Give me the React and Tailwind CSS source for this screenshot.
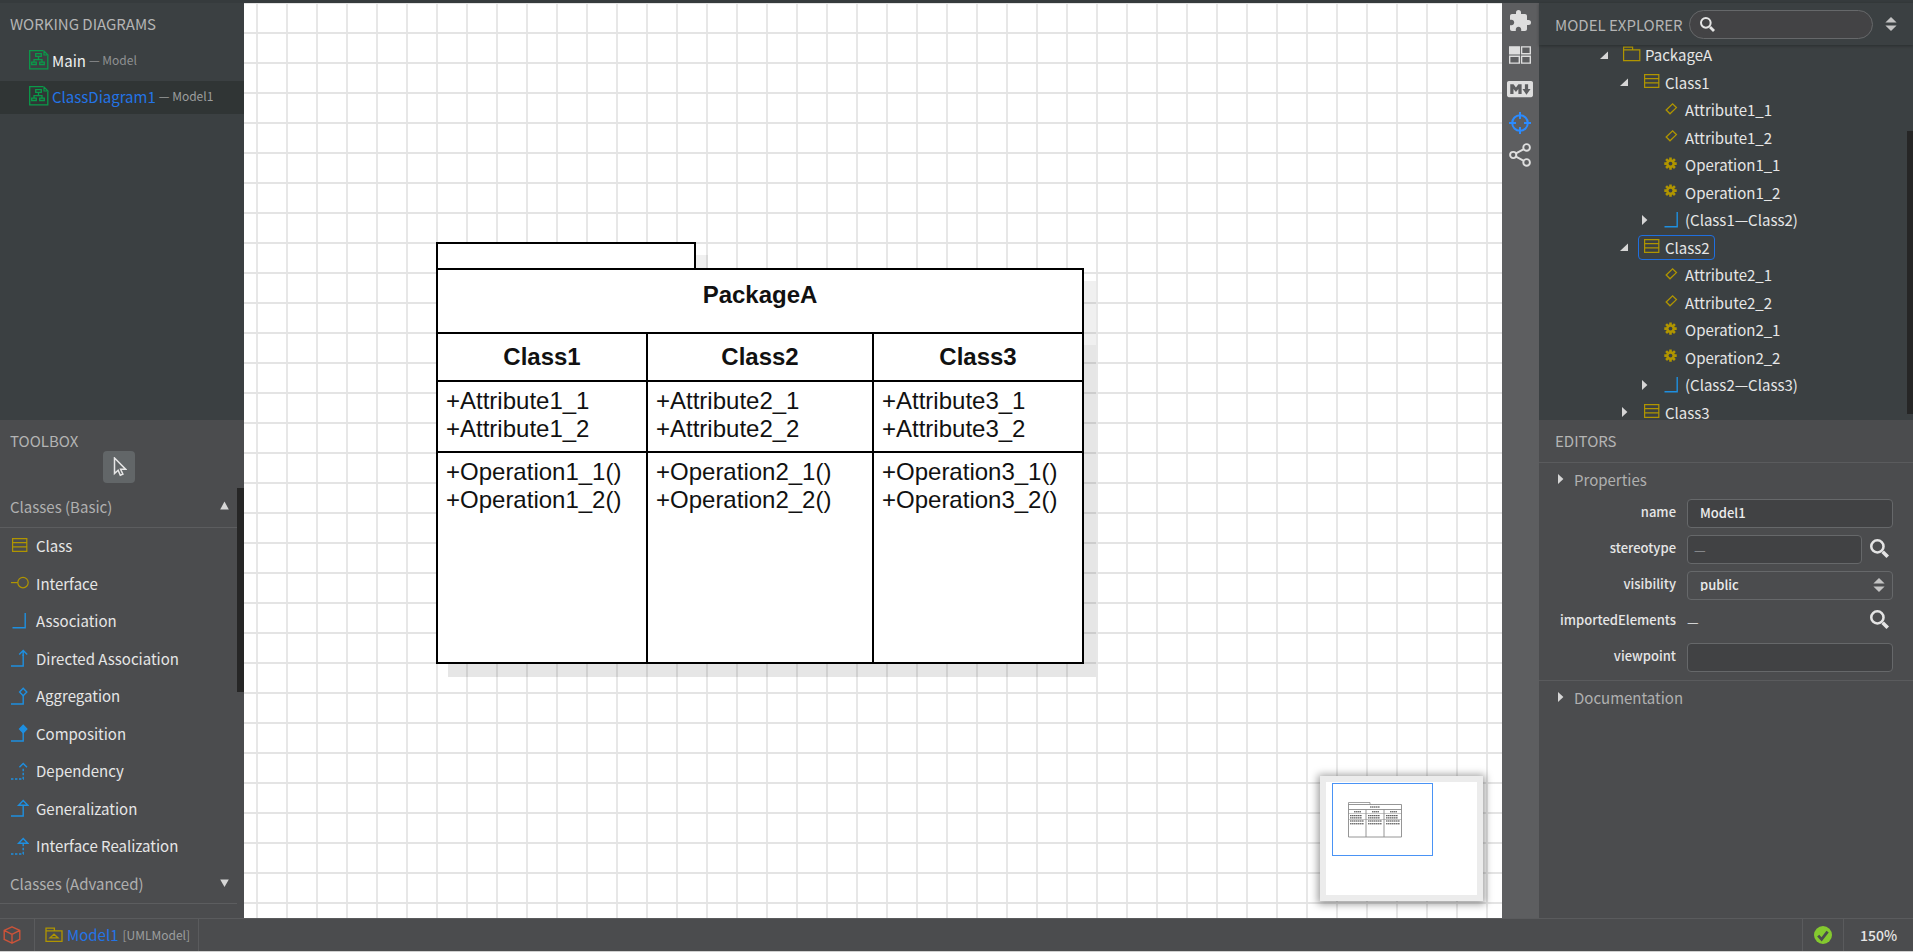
import React from "react";
import { MdExtension } from "react-icons/md";

const GOLD = "#b09500";
const BLUE = "#1e8fe0";

/* ---------- icons ---------- */

function DiagramIcon() {
  return (
    <svg width="20" height="20" viewBox="0 0 20 20" fill="none" stroke="#0a9a4a" strokeWidth="1.3" className="shrink-0">
      <path d="M14 .7H.7v18.1h18.1V5.5" />
      <path d="M15 1v4h4z" strokeWidth="1.2" />
      <path d="M6.7 3.7h5.6v2.6H6.7zM2.7 12.2h4.6v2.3H2.7zM10.7 12.2h4.6v2.3h-4.6z" />
      <path d="M9.5 6.5v3M5 12V9.6h8V12" />
    </svg>
  );
}

function ClassIcon() {
  return (
    <svg width="18" height="18" viewBox="0 0 18 18" fill="none" stroke={GOLD} strokeWidth="1.2" className="shrink-0">
      <path d="M1.6 1.6h14.2v12.8H1.6zM1.6 5.7h14.2M1.6 9.9h14.2" />
    </svg>
  );
}

function InterfaceIcon() {
  return (
    <svg width="18" height="18" viewBox="0 0 18 18" fill="none" stroke={GOLD} strokeWidth="1.2" className="shrink-0">
      <circle cx="12" cy="8.6" r="5.2" />
      <path d="M0 8.6h6.8" />
    </svg>
  );
}

function PackageIcon() {
  return (
    <svg width="18" height="18" viewBox="0 0 18 18" fill="none" stroke={GOLD} strokeWidth="1.2" className="shrink-0">
      <path d="M.6 14.6V1.2h9v2.6h7.2v10.8zM.6 3.8h9" />
    </svg>
  );
}

function ModelIcon() {
  return (
    <svg width="18" height="16" viewBox="0 0 18 16" fill="none" stroke={GOLD} strokeWidth="1.3" className="shrink-0">
      <path d="M1 14.3V1.2h8.4v2.6H17v10.5zM1 3.8h8.4" />
      <path d="M5 10.8h8l-4-3.6z" />
    </svg>
  );
}

function AttributeIcon() {
  return (
    <svg width="18" height="18" viewBox="0 0 18 18" fill="none" stroke={GOLD} strokeWidth="1.3" className="shrink-0">
      <path d="M3.2 9 9.6 2.8l3.8 3.8-6.4 6.2z" />
    </svg>
  );
}

function OperationIcon() {
  return (
    <svg width="18" height="18" viewBox="0 0 18 18" className="shrink-0">
      <g stroke={GOLD} strokeWidth="2.6">
        <path d="M7.5 1.4v12.4M1.3 7.6h12.4M3.1 3.2l8.8 8.8M11.9 3.2l-8.8 8.8" />
      </g>
      <circle cx="7.5" cy="7.6" r="4.4" fill={GOLD} />
      <circle cx="7.5" cy="7.6" r="1.9" fill="#3b4042" />
    </svg>
  );
}

function AssociationIcon() {
  return (
    <svg width="18" height="18" viewBox="0 0 18 18" fill="none" stroke={BLUE} strokeWidth="1.4" className="shrink-0">
      <path d="M1.5 15.8h12.7V1" />
    </svg>
  );
}

function RelationIcon({ dashed, children }) {
  return (
    <svg width="18" height="18" viewBox="0 0 18 18" fill="none" stroke={BLUE} strokeWidth="1.4" className="shrink-0">
      <path d="M0 17h12.2V5.5" strokeDasharray={dashed ? "2.4 1.6" : undefined} />
      {children}
    </svg>
  );
}

function SearchIcon({ size }) {
  return (
    <svg width={size} height={size} viewBox="0 0 18 18" fill="none" stroke="#e4e4e4" className="shrink-0">
      <circle cx="7" cy="7" r="5.8" strokeWidth="2.4" />
      <path d="M12 12l4.8 4.8" strokeWidth="3.4" />
    </svg>
  );
}

function SortIcon({ className }) {
  return (
    <svg width="12" height="16" viewBox="0 0 12 16" fill="#c4c4c4" className={className}>
      <path d="M6 1l5.6 5.6H.4zM6 15L.4 9.4h11.2z" />
    </svg>
  );
}

function Triangle({ dir }) {
  const shapes = {
    right: "M2 0l5.4 5L2 10z",
    open: "M0 9 8 1.4V9z",
    up: "M4.5 .6 8.8 8.4H.2z",
    down: "M4.5 9L.2 1.5h8.6z",
  };
  return (
    <svg width="9" height="10" viewBox="0 0 9 10" fill="#d6d6d6" className="shrink-0">
      <path d={shapes[dir]} />
    </svg>
  );
}

/* ---------- left side ---------- */

const tools = [
  ["Class", <ClassIcon />],
  ["Interface", <InterfaceIcon />],
  ["Association", <AssociationIcon />],
  ["Directed Association", <RelationIcon><path d="M12.2 7V1.5M8.2 5.4l4-4 4 4" /></RelationIcon>],
  ["Aggregation", <RelationIcon><path d="M12.2 1.2 15.8 5l-3.6 3.8L8.6 5z" fill="#4b4c4e" /></RelationIcon>],
  ["Composition", <RelationIcon><path d="M12.2 1.2 15.8 5l-3.6 3.8L8.6 5z" fill={BLUE} /></RelationIcon>],
  ["Dependency", <RelationIcon dashed><path d="M8.4 5.2l3.8-3.8L16 5.2" /></RelationIcon>],
  ["Generalization", <RelationIcon><path d="M12.2 1.4l4.6 4.8H7.6z" fill="#4b4c4e" /></RelationIcon>],
  ["Interface Realization", <RelationIcon dashed><path d="M12.2 1.4l4.6 4.8H7.6z" fill="#4b4c4e" /></RelationIcon>],
];

function WorkingDiagrams() {
  return (
    <section className="h-[417px] shrink-0 bg-[#3b4042] pt-2">
      <h2 className="px-[10px] text-[15px] leading-[26px] text-[#b4b4b4]">WORKING DIAGRAMS</h2>
      <ul className="mt-2">
        <li className="flex h-[33px] items-center gap-[3px] pb-[3px] pl-[29px]">
          <DiagramIcon />
          <span className="text-[15px] text-[#f0f0f0]">Main</span>
          <span className="text-[12px] text-[#8f9192]">— Model</span>
        </li>
        <li className="mt-[3px] flex h-[33px] items-center gap-[3px] bg-[#303535] pb-[3px] pl-[29px]">
          <DiagramIcon />
          <span className="text-[15px] text-[#2374e6]">ClassDiagram1</span>
          <span className="text-[12px] text-[#9c9e9e]">— Model1</span>
        </li>
      </ul>
    </section>
  );
}

function Toolbox() {
  const group = "flex w-full items-center justify-between border-b border-[#5c5d5f] pr-2 pb-[3px] pl-[10px] text-[15px] text-[#b0b0b0]";
  return (
    <section className="flex min-h-0 flex-1 flex-col bg-[#4b4c4e] pt-2">
      <h2 className="px-[10px] text-[15px] leading-[26px] text-[#b4b4b4]">TOOLBOX</h2>
      <button aria-label="Select" className="-mt-[3px] ml-[103px] grid size-8 shrink-0 place-items-center rounded bg-[#626668]">
        <svg width="16" height="20" viewBox="0 0 16 20" fill="none" stroke="#e6e6e6" strokeWidth="1.5">
          <path d="M3.5 1v15.5l3.6-3.2 2.2 5 2.6-1.1-2.3-5h5z" />
        </svg>
      </button>
      <div className="mt-[5px] flex min-h-0 flex-1 overflow-hidden">
        <div className="min-w-0 flex-1">
          <button className={`${group} h-10`}>
            Classes (Basic)
            <Triangle dir="up" />
          </button>
          <ul>
            {tools.map(([name, icon]) => (
              <li key={name} className="flex items-center gap-[7px] pb-[3px] pl-[11px] text-[15px] text-[#e6e6e6] odd:h-[38px] even:h-[37px]">
                {icon}
                {name}
              </li>
            ))}
          </ul>
          <button className={`${group} h-[38px]`}>
            Classes (Advanced)
            <Triangle dir="down" />
          </button>
        </div>
        <div className="h-[204px] w-[7px] bg-[#262626]" />
      </div>
    </section>
  );
}

/* ---------- canvas ---------- */

const classes = [1, 2, 3].map((n) => ({
  name: `Class${n}`,
  attributes: [`+Attribute${n}_1`, `+Attribute${n}_2`],
  operations: [`+Operation${n}_1()`, `+Operation${n}_2()`],
}));

function PackageNode() {
  return (
    <div className="absolute top-[239px] left-[192px] w-[648px] font-['Liberation_Sans',sans-serif] text-[24px] leading-7 text-[#111]">
      <div className="h-[26px] w-[260px] border-2 border-b-0 border-black bg-white shadow-[12px_13px_0_rgba(0,0,0,0.06)]" />
      <div className="relative border-2 border-black bg-white shadow-[12px_13px_0_rgba(0,0,0,0.06)]">
        <div className="h-[62px] pt-[11px] text-center font-bold">PackageA</div>
        <div className="-mx-[2px] -mb-[2px] grid grid-cols-[210px_226px_1fr] border-2 border-black shadow-[12px_13px_0_rgba(0,0,0,0.04)]">
          {classes.map((c, i) => (
            <div key={c.name} className={i < 2 ? "h-[328px] border-r-2 border-black" : "h-[328px]"}>
              <div className="py-[9px] text-center font-bold">{c.name}</div>
              <div className="border-t-2 border-black px-2 pt-[5px] pb-2">
                {c.attributes.map((a) => <div key={a}>{a}</div>)}
              </div>
              <div className="border-t-2 border-black px-2 pt-[5px]">
                {c.operations.map((o) => <div key={o}>{o}</div>)}
              </div>
            </div>
          ))}
        </div>
      </div>
    </div>
  );
}

function Minimap() {
  return (
    <div className="absolute right-[19px] bottom-[17px] h-[125px] w-[163px] border-[6px] border-[#ececec] bg-white pt-px pl-[6px] shadow-[0_1px_8px_2px_rgba(0,0,0,0.4)]">
      <div className="h-[73px] w-[101px] border border-[#4a93f5] pt-[18px] pl-[15px]">
        <svg width="56" height="38" viewBox="0 0 56 38" fill="none" stroke="#8a8a8a">
          <path d="M.5 3V.5h21.5V3" strokeWidth=".8" />
          <path d="M.5 2.5h53v32.5H.5zM.5 7.5h53M18 7.5V35M36 7.5V35" strokeWidth=".9" />
          <path d="M.5 11.5h53M.5 17.5h53" strokeWidth=".5" />
          <g stroke="#222" strokeWidth=".9" strokeDasharray="1.6 .4">
            <path d="M22 5h10M6 9.8h7M24 9.8h7M42 9.8h7" />
            <path d="M2 13.7h12M20 13.7h12M38 13.7h12M2 15.9h12M20 15.9h12M38 15.9h12" />
            <path d="M2 19h14M20 19h14M38 19h14M2 21.8h14M20 21.8h14M38 21.8h14" />
          </g>
        </svg>
      </div>
    </div>
  );
}

function Canvas() {
  return (
    <main className="relative min-w-0 flex-1 overflow-hidden bg-white bg-[linear-gradient(#e4e4e4_2px,transparent_2px),linear-gradient(90deg,#e7e7e7_2px,transparent_2px)] bg-[size:30px_30px] bg-[position:12px_-1px]">
      <PackageNode />
      <Minimap />
    </main>
  );
}

/* ---------- vertical tool strip ---------- */

function ToolStrip() {
  return (
    <nav className="flex w-[37px] shrink-0 flex-col items-center bg-[#5d5e60] pt-1 pr-[2px] text-[#dedede]">
      <button aria-label="Extensions" className="grid h-7 w-full place-items-center"><MdExtension size={24} /></button>
      <button aria-label="Layout" className="mt-[6px] grid h-7 w-full place-items-center">
        <svg width="22" height="18" viewBox="0 0 22 18" fill="none" stroke="currentColor" strokeWidth="1.4">
          <path d="M.7.9h9.6v6.9H.7z" fill="currentColor" />
          <path d="M12.6.9h8.7v6.9h-8.7zM.7 10.3h9.6v6.8H.7zM12.6 10.3h8.7v6.8h-8.7z" />
        </svg>
      </button>
      <button aria-label="Markdown" className="mt-[6px] grid h-7 w-full place-items-center">
        <svg width="26" height="26" viewBox="0 0 16 16" fill="currentColor">
          <path d="M14.85 3H1.15C.52 3 0 3.52 0 4.15v7.69C0 12.48.52 13 1.15 13h13.69c.64 0 1.15-.52 1.15-1.15v-7.7C16 3.52 15.48 3 14.85 3zM9 11H7V8L5.5 9.92 4 8v3H2V5h2l1.5 2L7 5h2v6zm2.99.5L9.5 8H11V5h2v3h1.5l-2.51 3.5z" />
        </svg>
      </button>
      <button aria-label="Center" className="mt-[6px] grid h-7 w-full place-items-center">
        <svg width="22" height="22" viewBox="0 0 22 22" fill="none" stroke="#2b8bff" strokeWidth="2">
          <circle cx="11" cy="11" r="7.8" />
          <path d="M11 0v7M11 15v7M0 11h7M15 11h7" />
        </svg>
      </button>
      <button aria-label="Share" className="mt-1 grid h-7 w-full place-items-center">
        <svg width="22" height="24" viewBox="0 0 22 24" fill="none" stroke="currentColor" strokeWidth="1.9">
          <circle cx="4.2" cy="12" r="3.1" />
          <circle cx="17.6" cy="4.4" r="3.3" />
          <circle cx="17.6" cy="19.4" r="3.3" />
          <path d="M7 10.4l7.8-4.3M7 13.6l7.8 4.2" />
        </svg>
      </button>
    </nav>
  );
}

/* ---------- right side ---------- */

const tree = [
  [0, "PackageA", "package", "open"],
  [1, "Class1", "class", "open"],
  [2, "Attribute1_1", "attribute"],
  [2, "Attribute1_2", "attribute"],
  [2, "Operation1_1", "operation"],
  [2, "Operation1_2", "operation"],
  [2, "(Class1—Class2)", "association", "right"],
  [1, "Class2", "class", "open", true],
  [2, "Attribute2_1", "attribute"],
  [2, "Attribute2_2", "attribute"],
  [2, "Operation2_1", "operation"],
  [2, "Operation2_2", "operation"],
  [2, "(Class2—Class3)", "association", "right"],
  [1, "Class3", "class", "right"],
];

const treeIcons = {
  package: PackageIcon,
  class: ClassIcon,
  attribute: AttributeIcon,
  operation: OperationIcon,
  association: AssociationIcon,
};

const indents = ["pl-[61px]", "pl-[81px]", "pl-[101px]"];

function Explorer() {
  return (
    <section className="flex h-[417px] shrink-0 flex-col bg-[#3b4042]">
      <header className="z-10 flex h-[42px] shrink-0 items-center pr-4 pl-4 shadow-[0_1px_3px_rgba(0,0,0,0.3)]">
        <h2 className="w-[134px] shrink-0 text-[15px] whitespace-nowrap text-[#b4b4b4]">MODEL EXPLORER</h2>
        <label className="flex h-[29px] min-w-0 flex-1 items-center rounded-full border border-[#66686a] bg-[#434345] pl-[10px]">
          <SearchIcon size={15} />
          <input type="search" aria-label="Search model" className="ml-2 min-w-0 flex-1 bg-transparent text-[14px] text-white outline-none" />
        </label>
        <button aria-label="Sort" className="ml-3"><SortIcon /></button>
      </header>
      <div className="flex min-h-0 flex-1 overflow-hidden">
        <ul className="-mt-1 min-w-0 flex-1">
          {tree.map(([level, name, kind, arrow, selected]) => {
            const Icon = treeIcons[kind];
            return (
              <li key={name} className={`flex items-center odd:h-[27px] even:h-[28px] ${indents[level]}`}>
                <span className="w-[18px] shrink-0">{arrow && <Triangle dir={arrow} />}</span>
                <span className={`flex h-[25px] items-center gap-1 rounded border px-1 text-[15px] text-[#e6e6e6] ${selected ? "border-[#1f6fe0]" : "border-transparent"}`}>
                  <Icon />
                  {name}
                </span>
              </li>
            );
          })}
        </ul>
        <div className="mt-[86px] mb-[6px] w-[6px] bg-[#262626]" />
      </div>
    </section>
  );
}

function Field({ id, label, children }) {
  return (
    <div className="flex items-center">
      <label htmlFor={id} className="w-[137px] shrink-0 pr-[11px] pb-1 text-right text-[13px] font-medium text-[#e6e6e6]">{label}</label>
      {children}
    </div>
  );
}

function Editors() {
  const box = "h-[29px] min-w-0 flex-1 rounded border border-[#66686a] text-[13px] font-medium text-[#ececec]";
  const heading = "flex h-9 items-center gap-[9px] pb-1 pl-[17px] text-[15px] text-[#b0b0b0]";
  return (
    <section className="min-h-0 flex-1 overflow-hidden bg-[#4b4c4e]">
      <h2 className="border-b border-[#5a5b5d] px-4 pt-2 pb-2 text-[15px] leading-[26px] text-[#b4b4b4]">EDITORS</h2>
      <button className={heading}>
        <Triangle dir="right" />
        Properties
      </button>
      <form className="flex flex-col gap-[7px] border-b border-[#5a5b5d] pr-5 pb-2 pl-[11px]">
        <Field id="name" label="name">
          <input id="name" defaultValue="Model1" className={`${box} bg-[#414244] px-3 pb-[2px]`} />
        </Field>
        <Field id="stereotype" label="stereotype">
          <input id="stereotype" placeholder="—" className={`${box} bg-[#414244] px-[6px] placeholder:text-[#85878a]`} />
          <button type="button" aria-label="Find stereotype" className="mr-1 ml-2 pb-[2px]"><SearchIcon size={19} /></button>
        </Field>
        <Field id="visibility" label="visibility">
          <span className="relative flex min-w-0 flex-1">
            <select id="visibility" defaultValue="public" className={`${box} appearance-none bg-[#4b4c4e] px-3 pb-[2px]`}>
              <option>public</option>
              <option>protected</option>
              <option>private</option>
              <option>package</option>
            </select>
            <SortIcon className="pointer-events-none absolute top-[6px] right-2" />
          </span>
        </Field>
        <Field id="imported" label="importedElements">
          <output id="imported" className="flex h-[29px] flex-1 items-center text-[13px] text-[#ececec]">—</output>
          <button type="button" aria-label="Find imported elements" className="mr-1 ml-2 pb-1"><SearchIcon size={19} /></button>
        </Field>
        <Field id="viewpoint" label="viewpoint">
          <input id="viewpoint" className={`${box} bg-[#414244] px-3`} />
        </Field>
      </form>
      <button className={heading}>
        <Triangle dir="right" />
        Documentation
      </button>
    </section>
  );
}

/* ---------- status bar ---------- */

function StatusBar() {
  return (
    <footer className="flex h-[34px] shrink-0 border-t border-b border-t-[#5a5b5d] border-b-[#d0d0d0] bg-[#4b4c4e]">
      <div className="flex w-[35px] items-center border-r border-[#5a5b5d] pl-[3px]">
        <svg width="18" height="18" viewBox="0 0 18 18" fill="none" stroke="#cc5339" strokeWidth="1.4" strokeLinejoin="round">
          <path d="M9 .8l7.8 3.6v9L9 17.2 1.2 13.4v-9zM1.2 4.4 9 8.4l7.8-4M9 8.4v8.8" />
        </svg>
      </div>
      <div className="flex items-center gap-1 border-r border-[#5a5b5d] pr-2 pb-px pl-[10px]">
        <ModelIcon />
        <span className="text-[15px] text-[#2374e6]">Model1</span>
        <span className="text-[12px] text-[#9c9e9e]">[UMLModel]</span>
      </div>
      <div className="flex-1" />
      <div className="grid w-[42px] place-items-center border-r border-l border-[#5a5b5d]">
        <svg width="18" height="18" viewBox="0 0 18 18">
          <circle cx="9" cy="9" r="9" fill="#84c92f" />
          <path d="M4.2 9.6l3.4 3.8 6-7.8" fill="none" stroke="#4b4c4e" strokeWidth="2.8" />
        </svg>
      </div>
      <button className="w-[69px] text-[14px] font-medium text-[#e6e6e6]">150%</button>
    </footer>
  );
}

export default function App() {
  return (
    <div className="flex h-screen flex-col border-t-[3px] border-[#363b3d] bg-[#4b4c4e] font-['Noto_Sans_CJK_SC',sans-serif] leading-none">
      <div className="flex min-h-0 flex-1">
        <aside className="flex w-[244px] shrink-0 flex-col">
          <WorkingDiagrams />
          <Toolbox />
        </aside>
        <Canvas />
        <ToolStrip />
        <aside className="flex w-[374px] shrink-0 flex-col">
          <Explorer />
          <Editors />
        </aside>
      </div>
      <StatusBar />
    </div>
  );
}
